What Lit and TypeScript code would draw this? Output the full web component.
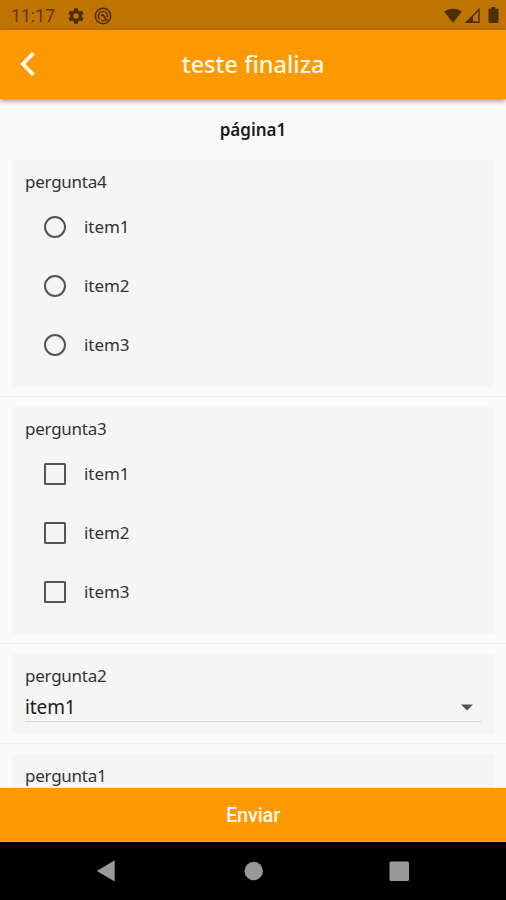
import { LitElement, html, css, svg } from "lit";
import { customElement, property } from "lit/decorators.js";

@customElement("choice-card")
class ChoiceCard extends LitElement {
  @property() label = "";
  @property() kind = "radio";
  @property({ attribute: false }) items: string[] = [];

  static styles = css`
    :host { display: block; box-sizing: border-box; height: 227px; margin: 0 12px; padding: 10px 13px 0; background: #f5f5f5; border-radius: 3px; }
    .label { height: 27px; line-height: 24px; font-size: 17px; letter-spacing: -0.25px; color: #333; }
    .row { display: flex; align-items: center; height: 59px; padding-left: 17.5px; gap: 17.5px; }
    .text { font-size: 17px; letter-spacing: -0.05px; line-height: 24px; color: #333; }
    svg { display: block; width: 24px; height: 24px; fill: none; stroke: #555; stroke-width: 2; }
  `;

  render() {
    return html`
      <div class="label">${this.label}</div>
      ${this.items.map((item) => html`
        <div class="row">
          <svg viewBox="0 0 24 24">
            ${this.kind === "radio"
              ? svg`<circle cx="12" cy="12" r="10"></circle>`
              : svg`<rect x="2" y="2" width="20" height="20" rx="0.5"></rect>`}
          </svg>
          <span class="text">${item}</span>
        </div>`)}
    `;
  }
}

@customElement("app-root")
class AppRoot extends LitElement {
  static styles = css`
    :host { display: flex; flex-direction: column; width: 506px; height: 900px; overflow: hidden; background: #fafafa; font-family: "Noto Sans", "Open Sans", sans-serif; }
    svg { display: block; flex: none; }
    .status { flex: none; display: flex; align-items: center; height: 30px; box-sizing: border-box; padding: 1px 7px 0 11px; background: #bf7300; color: #5e3800; }
    .time { width: 56px; font-family: Roboto, sans-serif; font-size: 17.5px; letter-spacing: 0.1px; font-weight: 400; }
    .gear { margin-right: 9px; }
    .grow { flex: 1; }
    .wifi { margin-right: 3px; }
    .signal { margin-right: 8px; }
    .bar { flex: none; display: grid; grid-template-columns: 60px 1fr 60px; align-items: center; height: 68.5px; background: #ff9900; box-shadow: 0 2px 5px rgba(0, 0, 0, 0.4); z-index: 1; }
    .back { margin-left: 16px; }
    .title { text-align: center; color: #fff8ec; font-size: 23.5px; font-weight: 500; line-height: 32px; }
    .list { flex: 1; min-height: 0; overflow: hidden; }
    .page { height: 61.5px; box-sizing: border-box; padding-top: 19px; text-align: center; font-size: 17px; line-height: 24px; font-weight: 600; color: #1c1c1c; }
    .rule { height: 1px; margin: 9px 0 10px; background: #eee; }
    .card { box-sizing: border-box; height: 80px; margin: 0 12px; padding: 10px 12px 0 13px; background: #f5f5f5; border-radius: 3px; }
    .label { height: 25px; line-height: 24px; font-size: 17px; letter-spacing: -0.25px; color: #333; }
    .select { display: flex; align-items: center; justify-content: space-between; height: 33px; box-sizing: border-box; padding: 4px 9px 0 0; border-bottom: 1px solid #dcdcdc; font-size: 19px; letter-spacing: -0.1px; line-height: 26px; color: #1c1c1c; }
    .send { flex: none; height: 54.5px; display: flex; align-items: center; justify-content: center; background: #ff9900; color: #fff8ec; font-family: Roboto, sans-serif; font-size: 20px; font-weight: 500; letter-spacing: -0.2px; }
    .nav { flex: none; height: 58px; background: #000; }
  `;

  render() {
    const items = ["item1", "item2", "item3"];
    return html`
      <div class="status">
        <span class="time">11:17</span>
        <svg class="gear" width="18" height="16" viewBox="2 2 20 20" fill="#4d2e00"><path d="M19.14 12.94c.04-.3.06-.61.06-.94s-.02-.64-.07-.94l2.03-1.58c.18-.14.23-.41.12-.61l-1.92-3.32c-.12-.22-.37-.29-.59-.22l-2.39.96c-.5-.38-1.03-.7-1.62-.94l-.36-2.54c-.04-.24-.24-.41-.48-.41h-3.84c-.24 0-.43.17-.47.41l-.36 2.54c-.59.24-1.13.57-1.62.94l-2.39-.96c-.22-.08-.47 0-.59.22L2.74 8.87c-.12.21-.08.47.12.61l2.03 1.58c-.05.3-.09.63-.09.94s.02.64.07.94l-2.03 1.58c-.18.14-.23.41-.12.61l1.92 3.32c.12.22.37.29.59.22l2.39-.96c.5.38 1.03.7 1.62.94l.36 2.54c.05.24.24.41.48.41h3.84c.24 0 .44-.17.47-.41l.36-2.54c.59-.24 1.13-.56 1.62-.94l2.39.96c.22.08.47 0 .59-.22l1.92-3.32c.12-.22.07-.47-.12-.61zM12 15.500a3.500 3.500 0 1 1 0-7 3.500 3.500 0 0 1 0 7z"/></svg>
        <svg width="18" height="18" viewBox="0 0 18 18" fill="none" stroke="#4d2e00"><circle cx="9" cy="9" r="7.700" stroke-width="1.500"/><path d="M5.700 12.300A4.600 4.600 0 1 1 13.400 10.200M12 12.500A4.600 4.600 0 0 1 7.300 13.300" stroke-width="1.400"/><path d="M6.200 8.600 9 6.800l3.200 3.700z" fill="#4d2e00" stroke="none"/><path d="m9.500 9.500 4.700 4.500" stroke-width="1.400"/></svg>
        <span class="grow"></span>
        <svg class="wifi" width="18" height="16" viewBox="0 0 18 16" fill="#4d2e00"><path d="M9 14.800.2 3.700C5-.2 13-.2 17.800 3.700z"/></svg>
        <svg class="signal" width="15" height="16" viewBox="0 0 15 16"><path d="M1.800 14.200 14 1.500v12.700z" fill="none" stroke="#4d2e00" stroke-width="1.400"/><path d="M0 15 8 7v8z" fill="#4d2e00"/></svg>
        <svg width="11" height="17" viewBox="0 0 11 17" fill="#4d2e00"><path d="M3.200 0h4.200v1.800h2.100c.6 0 1 .4 1 1v12c0 .7-.5 1.200-1.200 1.200H1.700c-.7 0-1.200-.5-1.200-1.200v-12c0-.6.4-1 1-1h1.700z"/></svg>
      </div>
      <div class="bar">
        <svg class="back" width="24" height="30" viewBox="0 0 24 30" fill="none" stroke="#fff" stroke-width="3.500"><path d="M17.400 4.200 6.800 15 17.400 25.800"/></svg>
        <div class="title">teste finaliza</div>
      </div>
      <div class="list">
        <div class="page">página1</div>
        <choice-card label="pergunta4" kind="radio" .items=${items}></choice-card>
        <div class="rule"></div>
        <choice-card label="pergunta3" kind="checkbox" .items=${items}></choice-card>
        <div class="rule"></div>
        <div class="card">
          <div class="label">pergunta2</div>
          <div class="select"><span>item1</span><svg width="12" height="7" viewBox="0 0 12 7" fill="#555"><path d="M0 .5h12L6 6.500z"/></svg></div>
        </div>
        <div class="rule"></div>
        <div class="card"><div class="label">pergunta1</div></div>
      </div>
      <div class="send">Enviar</div>
      <svg class="nav" width="506" height="58" viewBox="0 0 506 58" fill="#999"><path d="M96.800 29 114.700 18.200v21.300z"/><circle cx="253.700" cy="29" r="9.200"/><rect x="389.500" y="19.500" width="19.500" height="19.500" rx="1.500"/></svg>
    `;
  }
}
